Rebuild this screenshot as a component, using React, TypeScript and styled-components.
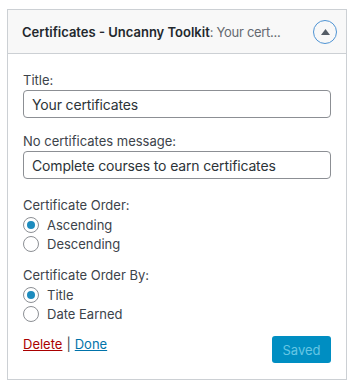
import React from "react";
import styled, { createGlobalStyle } from "styled-components";

const Global = createGlobalStyle`
  html, body { margin: 0; padding: 0; background: #fff; }
  body { font-family: Inter, "Noto Sans", Roboto, sans-serif; color: #1d2327; }
`;

const Page = styled.div`
  padding: 9px 5px 6px 7px;
`;

const Widget = styled.div`
  width: 340px;
  box-sizing: border-box;
  border: 1px solid #ccd0d4;
  background: #fff;
`;

const Header = styled.div`
  height: 43px;
  display: flex;
  align-items: center;
  justify-content: space-between;
  padding: 0 9px 0 14px;
  background: #f8f8f8;
  border-bottom: 1px solid #ccd0d4;
`;

const HeaderTitle = styled.div`
  font-size: 13px;
  font-weight: 600;
  color: #23282d;
  white-space: nowrap;
`;

const HeaderSub = styled.span`
  font-weight: 400;
  color: #646970;
  letter-spacing: -0.3px;
`;

const Toggle = styled.div`
  width: 24px;
  height: 24px;
  box-sizing: border-box;
  border-radius: 50%;
  border: 1.5px solid #4f94d4;
  display: flex;
  align-items: center;
  justify-content: center;
`;

const Body = styled.div`
  padding: 1px 15px 16px;
`;

const Field = styled.div<{ $top: number }>`
  display: flex;
  flex-direction: column;
  margin-top: ${(p) => p.$top}px;
`;

const Label = styled.div<{ $mb?: number }>`
  font-size: 13px;
  line-height: 18px;
  color: #3c434a;
  margin-bottom: ${(p) => p.$mb ?? 0}px;
`;

const Input = styled.div`
  height: 28px;
  box-sizing: border-box;
  border: 1px solid #8c8f94;
  border-radius: 4px;
  display: flex;
  align-items: center;
  padding: 0 8px;
  font-size: 14px;
  letter-spacing: -0.15px;
  color: #2c3338;
`;

const RadioRow = styled.div`
  display: flex;
  align-items: center;
  height: 19px;
  font-size: 13px;
  color: #3c434a;
`;

const RadioDot = styled.span<{ $on?: boolean }>`
  width: 16px;
  height: 16px;
  box-sizing: border-box;
  border-radius: 50%;
  border: 1px solid #8c8f94;
  margin-right: 8px;
  display: flex;
  align-items: center;
  justify-content: center;
  &::after {
    content: "";
    width: 8px;
    height: 8px;
    border-radius: 50%;
    background: #1e8cbe;
    display: ${(p) => (p.$on ? "block" : "none")};
  }
`;

const Actions = styled.div`
  display: flex;
  justify-content: space-between;
  align-items: flex-start;
  margin-top: 12px;
`;

const Links = styled.div`
  font-size: 13px;
  line-height: 18px;
  color: #3c434a;
  display: flex;
  gap: 4px;
`;

const Link = styled.a<{ $red?: boolean }>`
  color: ${(p) => (p.$red ? "#a00" : "#0073aa")};
  text-decoration: underline;
`;

const SaveButton = styled.div`
  width: 59px;
  height: 27px;
  margin-top: 1px;
  box-sizing: border-box;
  border-radius: 3px;
  background: #008ec2;
  color: #66c6e4;
  font-size: 13px;
  display: flex;
  align-items: center;
  justify-content: center;
`;

const Radio = ({ on, children }: { on?: boolean; children: React.ReactNode }) => (
  <RadioRow>
    <RadioDot $on={on} />
    {children}
  </RadioRow>
);

export default function App() {
  return (
    <Page>
      <Global />
      <Widget>
        <Header>
          <HeaderTitle>
            Certificates - Uncanny Toolkit<HeaderSub>: Your cert...</HeaderSub>
          </HeaderTitle>
          <Toggle>
            <svg width="9" height="6" viewBox="0 0 9 6">
              <path d="M4.5 0 L9 6 L0 6 Z" fill="#555d66" />
            </svg>
          </Toggle>
        </Header>
        <Body>
          <Field $top={16}>
            <Label $mb={1}>Title:</Label>
            <Input>Your certificates</Input>
          </Field>
          <Field $top={14}>
            <Label $mb={1}>No certificates message:</Label>
            <Input>Complete courses to earn certificates</Input>
          </Field>
          <Field $top={17}>
            <Label $mb={1}>Certificate Order:</Label>
            <Radio on>Ascending</Radio>
            <Radio>Descending</Radio>
          </Field>
          <Field $top={13}>
            <Label $mb={1}>Certificate Order By:</Label>
            <Radio on>Title</Radio>
            <Radio>Date Earned</Radio>
          </Field>
          <Actions>
            <Links>
              <Link $red>Delete</Link>|<Link>Done</Link>
            </Links>
            <SaveButton>Saved</SaveButton>
          </Actions>
        </Body>
      </Widget>
    </Page>
  );
}
